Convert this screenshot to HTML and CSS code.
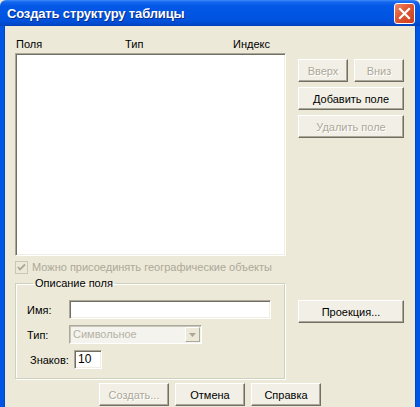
FILE: index.html
```html
<!DOCTYPE html>
<html lang="ru">
<head>
<meta charset="utf-8">
<title>Создать структуру таблицы</title>
<link rel="stylesheet" href="styles.css">
</head>
<body>
<div class="window">
  <div class="titlebar">
    <span class="title">Создать структуру таблицы</span>
    <span class="close">
      <svg width="13" height="13" viewBox="0 0 13 13"><path d="M2 2 L11 11 M11 2 L2 11" stroke="#fff" stroke-width="2.2" stroke-linecap="square"/></svg>
    </span>
  </div>
  <div class="frame">
    <div class="client">
      <div class="main">
        <div class="left">
          <div class="heads">
            <span class="h-name">Поля</span>
            <span class="h-type">Тип</span>
            <span class="h-idx">Индекс</span>
          </div>
          <div class="listbox"></div>
          <label class="check disabled">
            <svg class="cb" width="13" height="13" viewBox="0 0 13 13"><rect x="0.5" y="0.5" width="12" height="12" fill="#ECE9D8" stroke="#C9C7BA"/><path d="M3 6 L5 8.5 L10 3.5" fill="none" stroke="#ACA899" stroke-width="1.8"/></svg>
            <span>Можно присоединять географические объекты</span>
          </label>
          <fieldset class="group">
            <legend>Описание поля</legend>
            <div class="row">
              <span class="lbl w42">Имя:</span>
              <span class="edit name"></span>
            </div>
            <div class="row">
              <span class="lbl w42">Тип:</span>
              <span class="combo">
                <span class="combo-text">Символьное</span>
                <span class="combo-btn"><svg width="7" height="4" viewBox="0 0 7 4"><path d="M0 0 H7 L3.5 4 Z" fill="#ACA899"/></svg></span>
              </span>
            </div>
            <div class="row">
              <span class="lbl lbl-znak">Знаков:</span>
              <span class="edit num">10</span>
            </div>
          </fieldset>
        </div>
        <div class="right">
          <div class="pair">
            <button class="btn half" disabled>Вверх</button>
            <button class="btn half" disabled>Вниз</button>
          </div>
          <button class="btn wide">Добавить поле</button>
          <button class="btn wide" disabled>Удалить поле</button>
          <button class="btn wide proj">Проекция...</button>
        </div>
      </div>
      <div class="actions">
        <button class="btn act" disabled>Создать...</button>
        <button class="btn act">Отмена</button>
        <button class="btn act">Справка</button>
      </div>
    </div>
  </div>
</div>
</body>
</html>
```

FILE: styles.css
```css
* { box-sizing: border-box; }
html, body { margin: 0; padding: 0; }
body {
  width: 420px;
  height: 407px;
  overflow: hidden;
  font-family: "Liberation Sans", Arial, sans-serif;
  font-size: 11px;
  color: #000;
  background: #ECE9D8;
}
.window {
  width: 420px;
  height: 407px;
  display: flex;
  flex-direction: column;
}
.titlebar {
  height: 26px;
  flex: none;
  display: flex;
  align-items: center;
  justify-content: space-between;
  padding: 0 5px 0 7px;
  background: linear-gradient(#3C8CF9 0px, #1567EE 2px, #0358E6 6px, #0055E3 14px, #0153DE 20px, #0046C7 25px, #003BB0 26px);
  border-radius: 6px 6px 0 0;
}
.title {
  color: #fff;
  font-weight: bold;
  font-size: 13px;
  text-shadow: 1px 1px 0 #0A2D8A;
  letter-spacing: -0.15px;
}
.close {
  width: 21px;
  height: 21px;
  border: 1px solid #fff;
  border-radius: 3px;
  background: linear-gradient(135deg, #EE8A6A 0%, #E05A36 40%, #C93F1A 100%);
  display: flex;
  align-items: center;
  justify-content: center;
}
.frame {
  flex: 1;
  display: flex;
  border-left: 4px solid #0055E5;
  border-right: 4px solid #0055E5;
  background: #ECE9D8;
  box-shadow: inset 1px 0 0 #0046C7, inset -1px 0 0 #0046C7;
}
.client {
  flex: 1;
  padding-top: 12px;
  display: flex;
  flex-direction: column;
}
.main {
  display: flex;
  padding-left: 11px;
  gap: 12px;
}
.left {
  width: 271px;
  display: flex;
  flex-direction: column;
}
.heads {
  height: 13px;
  line-height: 13px;
  display: flex;
  padding-left: 1px;
}
.h-name { width: 109px; }
.h-type { width: 108px; }
.listbox {
  margin-top: 2px;
  height: 203px;
  background: #fff;
  border: 1px solid;
  border-color: #ACA899 #fff #fff #ACA899;
  box-shadow: inset 1px 1px 0 #716F64, inset -1px -1px 0 #F1EFE2;
}
.check {
  margin-top: 5px;
  height: 13px;
  display: flex;
  align-items: center;
  gap: 4px;
  line-height: 13px;
}
.check.disabled { color: #ACA899; }
.cb { flex: none; }
.group {
  margin: 3px 1px 0 0;
  padding: 10px 10px 9px 11px;
  border: 1px solid #D0D0BF;
  box-shadow: 1px 1px 0 #fff, inset 1px 1px 0 #fff;
  min-width: 0;
}
.group legend {
  padding: 0 2px;
  margin-left: 6px;
  line-height: 13px;
  color: #000;
}
.row {
  display: flex;
  align-items: center;
  height: 19px;
  margin-top: 6px;
}
.row:first-of-type { margin-top: 0; }
.lbl { flex: none; }
.w42 { width: 42px; }
.lbl-znak { margin-left: 3px; width: 44px; }
.edit {
  height: 19px;
  background: #fff;
  border: 1px solid;
  border-color: #ACA899 #fff #fff #ACA899;
  box-shadow: inset 1px 1px 0 #716F64, inset -1px -1px 0 #F1EFE2;
  line-height: 16px;
  padding-left: 3px;
}
.name { width: 202px; }
.num { width: 28px; font-size: 12px; }
.combo {
  width: 133px;
  height: 19px;
  display: flex;
  border: 1px solid;
  border-color: #ACA899 #fff #fff #ACA899;
  box-shadow: inset 1px 1px 0 #C9C7BA;
  background: #F4F3EE;
  padding: 1px;
}
.combo-text {
  flex: 1;
  color: #B5B2A4;
  line-height: 15px;
  padding-left: 2px;
}
.combo-btn {
  width: 15px;
  display: flex;
  align-items: center;
  justify-content: center;
  background: #ECE9D8;
  border: 1px solid;
  border-color: #fff #ACA899 #ACA899 #fff;
}
.right {
  width: 106px;
  padding-top: 21px;
  display: flex;
  flex-direction: column;
}
.pair {
  display: flex;
  justify-content: space-between;
}
.btn {
  height: 23px;
  font-family: "Liberation Sans", Arial, sans-serif;
  font-size: 11px;
  color: #000;
  background: #F2F0E6;
  border: 1px solid;
  border-color: #fff #716F64 #716F64 #fff;
  box-shadow: inset -1px -1px 0 #ACA899;
  padding: 0;
  margin: 0;
}
.btn:disabled {
  color: #ACA899;
  text-shadow: 1px 1px 0 #fff;
}
.half { width: 50px; }
.wide { width: 106px; margin-top: 5px; }
.proj { margin-top: 162px; }
.actions {
  margin-top: 4px;
  display: flex;
  justify-content: center;
  gap: 6px;
}
.act { width: 70px; }
```
